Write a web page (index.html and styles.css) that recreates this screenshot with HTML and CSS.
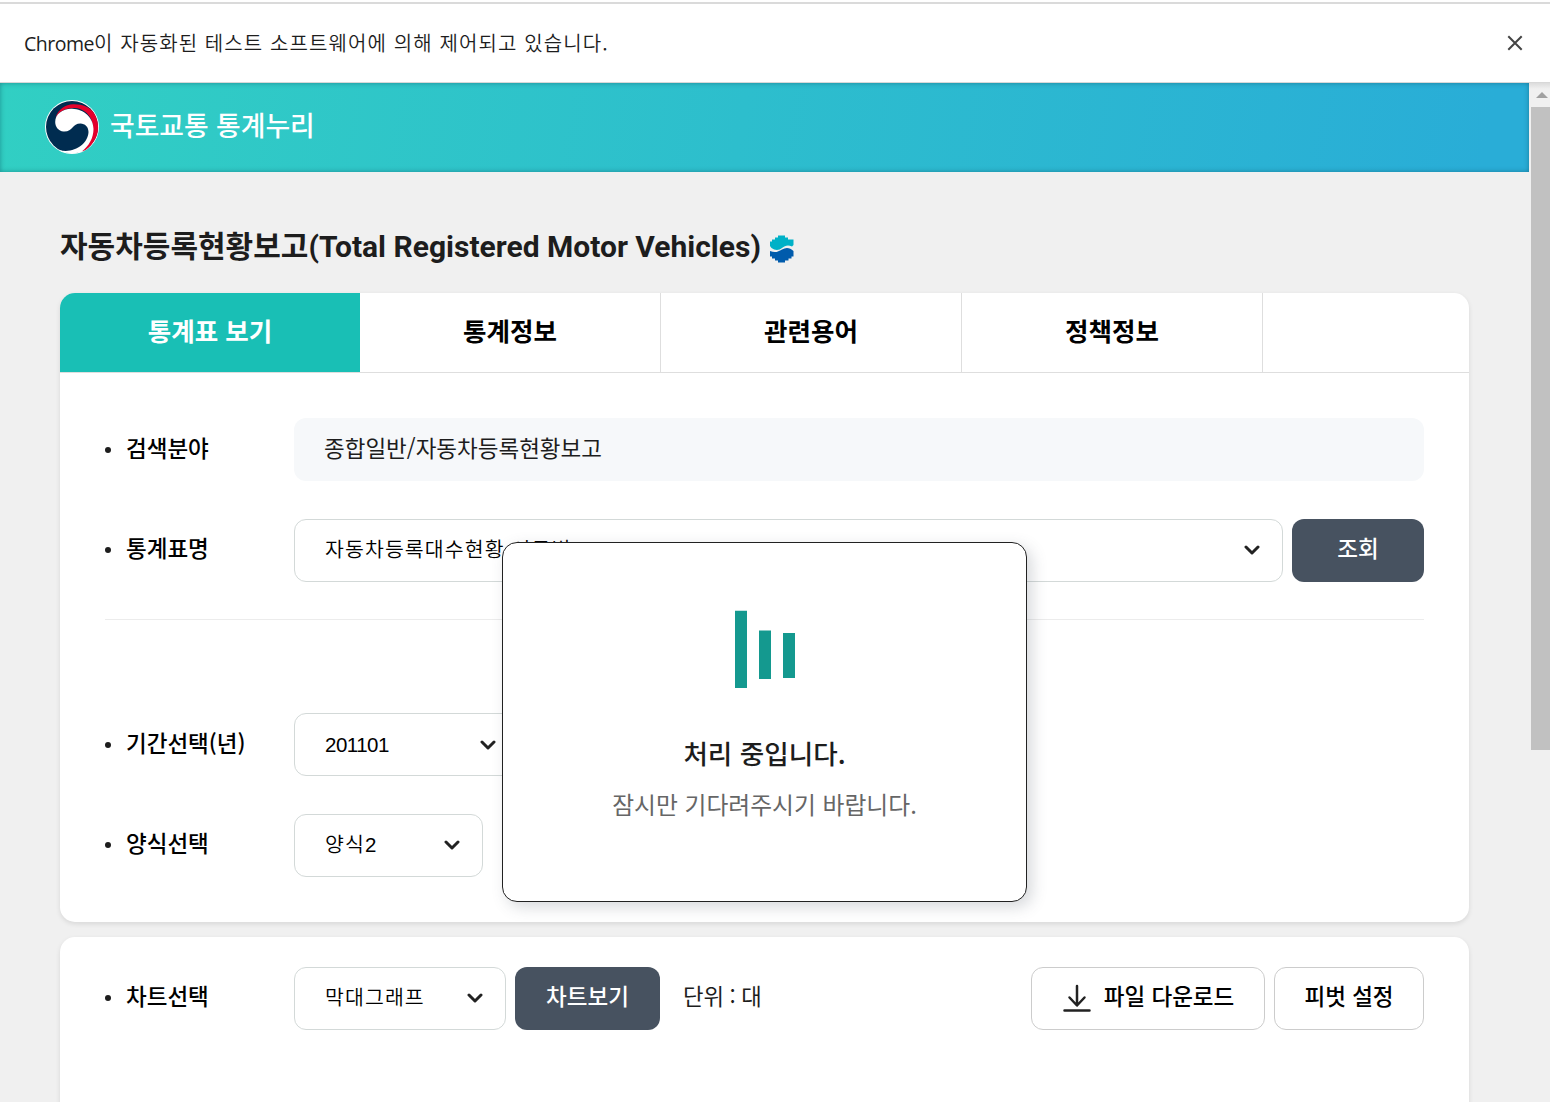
FILE: index.html
```html
<!DOCTYPE html>
<html lang="ko">
<head>
<meta charset="utf-8">
<title>국토교통 통계누리</title>
<link rel="stylesheet" href="styles.css">
</head>
<body>
<div class="infobar">
  <p class="infobar-text"><span class="latin">Chrome</span>이 자동화된 테스트 소프트웨어에 의해 제어되고 있습니다.</p>
  <svg class="close" width="16" height="16" viewBox="0 0 16 16"><path d="M1.3 1.3L14.7 14.7M14.7 1.3L1.3 14.7"/></svg>
</div>
<div class="viewport">
  <div class="page">
    <header class="header">
      <svg class="emblem" width="54" height="54" viewBox="0 0 54 54">
        <circle cx="27" cy="27" r="27" fill="#fff"/>
        <circle cx="27" cy="27" r="26" fill="#002c50"/>
        <path d="M10.500 18C13 9 21 4.500 28 4.300C37 4 45 7 49 13C55 23 54 34 49 41C46 46 42 50 37 51.500C43 45 48 37 48 28C48 16 39 8 29 8C21 8 14 11 10.500 18Z" fill="#e4002b"/>
        <path d="M10.200 22C10.200 14 18 8.500 27 8.800C39 9 48.500 18 48.500 29C48.500 38 44 46 36.500 51.700C33 53 29 53.500 24 53C20 53 16 51 14 50C29 54 43 44 43.500 32C43.500 27 40 23.500 35.500 23.500C27 23.500 28 32 18.500 31.500C13.500 31 10.200 27 10.200 22Z" fill="#fff"/>
      </svg>
      <span class="site">국토교통 통계누리</span>
    </header>
    <main class="main">
      <h1 class="title"><span class="title-text">자동차등록현황보고<span class="latin-title">(Total Registered Motor Vehicles)</span></span>
        <svg class="mark" width="24" height="28" viewBox="0 0 24 28">
          <path fill="#00b1c7" d="M8 .5H15V2.500H18V4.500H23.500V10L22 11.500C18 9.500 15 10.500 12 13C9 15.500 5 15.500 1.500 13L0 11V6.500H2V4.500H5V2.500H8Z"/>
          <path fill="#005bac" d="M0 16C5 18 8 17 12 14.500C16 12 20 12.500 23.500 16V21.500H21.500V23.500H18.500V25.500H15V27.500H8V25.500H5V23.500H2V21.500H0Z"/>
        </svg>
      </h1>
      <section class="card">
        <nav class="tabs">
          <a class="tab active">통계표 보기</a><a class="tab">통계정보</a><a class="tab">관련용어</a><a class="tab">정책정보</a>
        </nav>
        <div class="form">
          <div class="row">
            <span class="label">검색분야</span>
            <div class="readonly">종합일반/자동차등록현황보고</div>
          </div>
          <div class="row row-name">
            <span class="label">통계표명</span>
            <div class="select grow"><span>자동차등록대수현황 시도별</span><svg class="chev" width="16" height="10" viewBox="0 0 16 10"><path d="M2 2L8 8L14 2"/></svg></div>
            <button class="btn dark search">조회</button>
          </div>
          <div class="row row-period">
            <span class="label">기간선택(년)</span>
            <div class="select period"><span class="digits">201101</span><svg class="chev" width="16" height="10" viewBox="0 0 16 10"><path d="M2 2L8 8L14 2"/></svg></div>
          </div>
          <div class="row">
            <span class="label high">양식선택</span>
            <div class="select style"><span>양식<span class="digits">2</span></span><svg class="chev" width="16" height="10" viewBox="0 0 16 10"><path d="M2 2L8 8L14 2"/></svg></div>
          </div>
        </div>
      </section>
      <section class="card chart">
        <div class="row">
          <span class="label high">차트선택</span>
          <div class="select kind"><span>막대그래프</span><svg class="chev" width="16" height="10" viewBox="0 0 16 10"><path d="M2 2L8 8L14 2"/></svg></div>
          <button class="btn dark view">차트보기</button>
          <span class="unit">단위 : 대</span>
          <button class="btn line download"><svg class="dl" width="28" height="28" viewBox="0 0 28 28"><path d="M14 2V21M6.500 13.500L14 21.500L21.500 13.500M1.500 26.500H26.500"/></svg>파일 다운로드</button>
          <button class="btn line pivot">피벗 설정</button>
        </div>
      </section>
    </main>
  </div>
  <div class="scrollbar"><svg width="12" height="6" viewBox="0 0 12 6"><path d="M0 6L6 0L12 6Z"/></svg><div class="thumb"></div></div>
</div>
<div class="modal">
  <svg class="loader" width="60" height="78" viewBox="0 0 60 78"><path d="M0 .8H12V78H0ZM24 20.500H36V69H24ZM48 23H60V68H48Z"/></svg>
  <p class="wait">처리 중입니다.</p>
  <p class="hint">잠시만 기다려주시기 바랍니다.</p>
</div>
</body>
</html>
```
FILE: styles.css
```css
* { box-sizing: border-box; }
body {
  margin: 0;
  width: 1550px;
  height: 1102px;
  overflow: hidden;
  position: relative;
  background: #f0f0f0;
  color: #1d1d1d;
  font-family: "Noto Sans CJK KR", sans-serif;
}
h1, p { margin: 0; }
.infobar {
  height: 83px;
  padding: 0 27px 0 24px;
  display: flex;
  align-items: center;
  justify-content: space-between;
  background: linear-gradient(#fff 0 2px, #dadada 2px 4px, #fff 4px);
  border-bottom: 1px solid #d8d8d8;
}
.infobar-text { padding-top: 4px; font-size: 20px; font-weight: 350; line-height: 30px; letter-spacing: 1.1px; }
.infobar-text .latin { font: 400 19.500px "Open Sans", sans-serif; letter-spacing: -.5px; }
.close { fill: none; stroke: #444; stroke-width: 2; margin-top: 3px; }
.viewport { display: flex; height: 1019px; }
.page { width: 1529px; }
.header {
  height: 89px;
  padding: 0 0 1px 45px;
  display: flex;
  align-items: center;
  gap: 11px;
  background: linear-gradient(100deg, #31cfc3, #29add7 97%);
  box-shadow: inset 0 0 5px rgba(0, 50, 70, .4);
}
.site { color: #fff; font-size: 26.800px; font-weight: 500; line-height: 40px; margin-top: -4px; }
.main { padding: 51px 60px 0; }
.title { display: flex; gap: 9px; align-items: center; height: 44px; font-size: 30px; font-weight: 700; }
.title-text { line-height: 44px; white-space: nowrap; }
.latin-title { font-family: Roboto, sans-serif; }
.mark { margin-top: 8px; }
.card { background: #fff; border-radius: 15px; box-shadow: 0 2px 5px rgba(0, 0, 0, .1); overflow: hidden; }
.title + .card { margin-top: 26px; height: 629px; }
.tabs { display: flex; height: 80px; border-bottom: 1px solid #dedede; }
.tab {
  width: 301px;
  border-right: 1px solid #dedede;
  text-align: center;
  font-size: 25.500px;
  font-weight: 700;
  line-height: 73px;
  color: #000;
}
.tab.active { width: 300px; background: #19bfb5; color: #fff; border: 0; }
.form { padding: 45px 45px 0; }
.row { display: flex; align-items: center; height: 63px; }
.row + .row { margin-top: 38px; }
.row-name { height: 101px; padding-bottom: 38px; border-bottom: 1px solid #ececec; }
.row.row-period { margin-top: 93px; }
.label { width: 189px; display: flex; align-items: center; color: #000; font-size: 22.500px; font-weight: 500; line-height: 34px; padding-bottom: 6px; }
.label.high { padding-bottom: 8px; }
.label::before { content: ""; width: 6px; height: 6px; border-radius: 50%; background: #1d1d1d; margin: 6px 15px 0 0; }
.readonly { flex: 1; height: 63px; padding: 0 30px; border-radius: 12px; background: #f6f8fa; font-size: 22.500px; line-height: 58px; }
.select {
  height: 63px;
  padding: 0 22px 0 30px;
  display: flex;
  align-items: center;
  justify-content: space-between;
  border: 1px solid #d3d9d8;
  border-radius: 12px;
  font-size: 20.500px;
  font-weight: 350;
  letter-spacing: 1.100px;
  color: #000;
}
.select > span { padding-bottom: 5px; }
.select .digits { font: 400 20.500px "Liberation Sans", sans-serif; letter-spacing: -.5px; }
.select > .digits { padding-bottom: 0; }
.chev { fill: none; stroke: #222; stroke-width: 3; stroke-linecap: round; stroke-linejoin: round; margin-bottom: 1px; }
.period .chev { margin-bottom: 0; }
.grow { flex: 1; }
.period { width: 225px; }
.style { width: 189px; }
.kind { width: 212px; }
.btn { height: 63px; margin: 0; border: 0; border-radius: 12px; padding: 0 0 7px; font-family: inherit; font-size: 22.500px; font-weight: 500; white-space: nowrap; }
.dark { background: #475260; color: #fff; margin-left: 9px; }
.search { width: 132px; }
.view { width: 145px; }
.unit { margin: 0 auto 7px 23px; font-size: 22.300px; word-spacing: -.7px; }
.line { background: #fff; border: 1px solid #ccc; color: #000; }
.download { width: 234px; display: flex; align-items: center; justify-content: center; gap: 13px; padding-left: 1px; }
.dl { fill: none; stroke: #222; stroke-width: 2.500; stroke-linecap: round; stroke-linejoin: round; margin-top: 5px; }
.pivot { width: 150px; margin-left: 9px; }
.chart { margin-top: 15px; height: 200px; padding: 30px 45px; }
.scrollbar { flex: 1; padding: 9px 0 0 2px; background: linear-gradient(#dcdcdc, #f0f0f0 6px); }
.scrollbar svg { display: block; margin-left: 5px; fill: #a0a0a0; }
.thumb { margin-top: 9px; height: 643px; background: #c1c1c1; }
.modal {
  position: absolute;
  left: 502px;
  top: 542px;
  width: 525px;
  height: 360px;
  padding-top: 67px;
  display: flex;
  flex-direction: column;
  align-items: center;
  background: #fff;
  border: 1px solid #222;
  border-radius: 15px;
  box-shadow: 5px 5px 15px rgba(71, 82, 96, .22);
}
.loader { fill: #14998f; }
.wait { margin-top: 45px; font-size: 26.600px; font-weight: 500; line-height: 40px; }
.hint { margin-top: 13px; font-size: 23.800px; line-height: 36px; color: #666; }
```
